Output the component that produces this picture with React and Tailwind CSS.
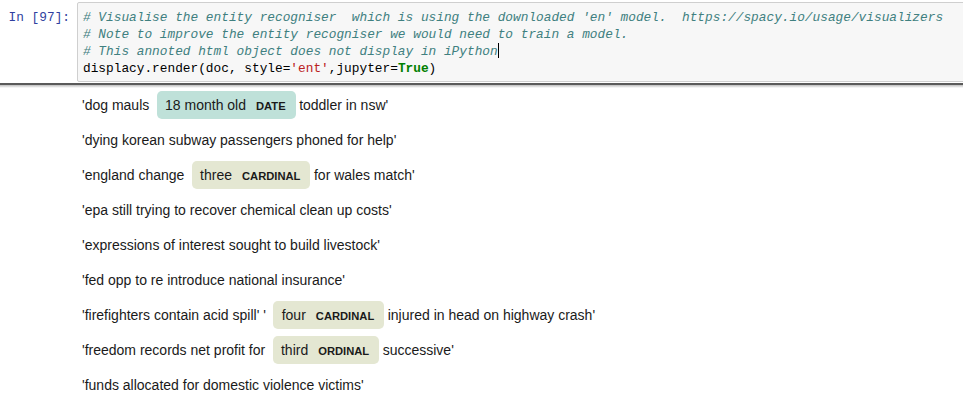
const rows = [
  ["'dog mauls ", { text: "18 month old", label: "DATE", bg: "bg-[#bfe1d9]" }, "toddler in nsw'"],
  ["'dying korean subway passengers phoned for help'"],
  ["'england change ", { text: "three", label: "CARDINAL", bg: "bg-[#e4e7d2]" }, "for wales match'"],
  ["'epa still trying to recover chemical clean up costs'"],
  ["'expressions of interest sought to build livestock'"],
  ["'fed opp to re introduce national insurance'"],
  ["'firefighters contain acid spill' ' ", { text: "four", label: "CARDINAL", bg: "bg-[#e4e7d2]" }, "injured in head on highway crash'"],
  ["'freedom records net profit for ", { text: "third", label: "ORDINAL", bg: "bg-[#e4e7d2]" }, "successive'"],
  ["'funds allocated for domestic violence victims'"],
];

function Ent({ ent }) {
  return (
    <mark className={`${ent.bg} text-[#1a1a1a] pl-[0.6em] pr-[10px] py-[0.45em] mx-[0.25em] leading-none rounded-[0.35em]`}>
      {ent.text}
      <span className="text-[0.8em] font-bold leading-none align-middle ml-[10px]">{ent.label}</span>
    </mark>
  );
}

export default function App() {
  return (
    <div className="w-[963px] h-[403px] overflow-hidden bg-white">

      {/* Input cell */}
      <div className="flex pt-[2px] font-['Liberation_Mono',monospace] text-[12.8px] leading-[17px]">
        <div className="w-[77px] shrink-0 text-right pr-[7px] pt-[7px] text-[#303f9f]">
          In&nbsp;[97]:
        </div>
        <div className="flex-1 -mr-4 border border-[#cfcfcf] rounded-[2px] bg-[#f7f7f7] pl-[5px] pt-[6px] pb-[4px] whitespace-pre text-black">
          <div className="italic text-[#408080]">
            {"# Visualise the entity recogniser  which is using the downloaded 'en' model.  https://spacy.io/usage/visualizers"}
          </div>
          <div className="italic text-[#408080]">
            # Note to improve the entity recogniser we would need to train a model.
          </div>
          <div className="italic text-[#408080]">
            # This annoted html object does not display in iPython
            <span className="inline-block w-px h-[15px] bg-black align-middle -mt-[2px]" />
          </div>
          <div>
            displacy.render(doc, style=<span className="text-[#ba2121]">'ent'</span>,jupyter=<span className="text-[#008000] font-bold">True</span>)
          </div>
        </div>
      </div>

      {/* Scroll shadow */}
      <div className="mt-[1px] h-[2px] bg-[#5a5a5a]" />
      <div className="h-[3px] bg-gradient-to-b from-[#bdbdbd] to-white" />

      {/* Output */}
      <div className="font-['Liberation_Sans',Arial,sans-serif] text-[14px] text-[#1a1a1a]">
        {rows.map((r, i) => (
          <div key={i} className="pl-[82px] leading-[2.5] whitespace-pre">
            {r.map((part, j) =>
              typeof part === "string" ? <span key={j}>{part}</span> : <Ent key={j} ent={part} />
            )}
          </div>
        ))}
      </div>

    </div>
  );
}
